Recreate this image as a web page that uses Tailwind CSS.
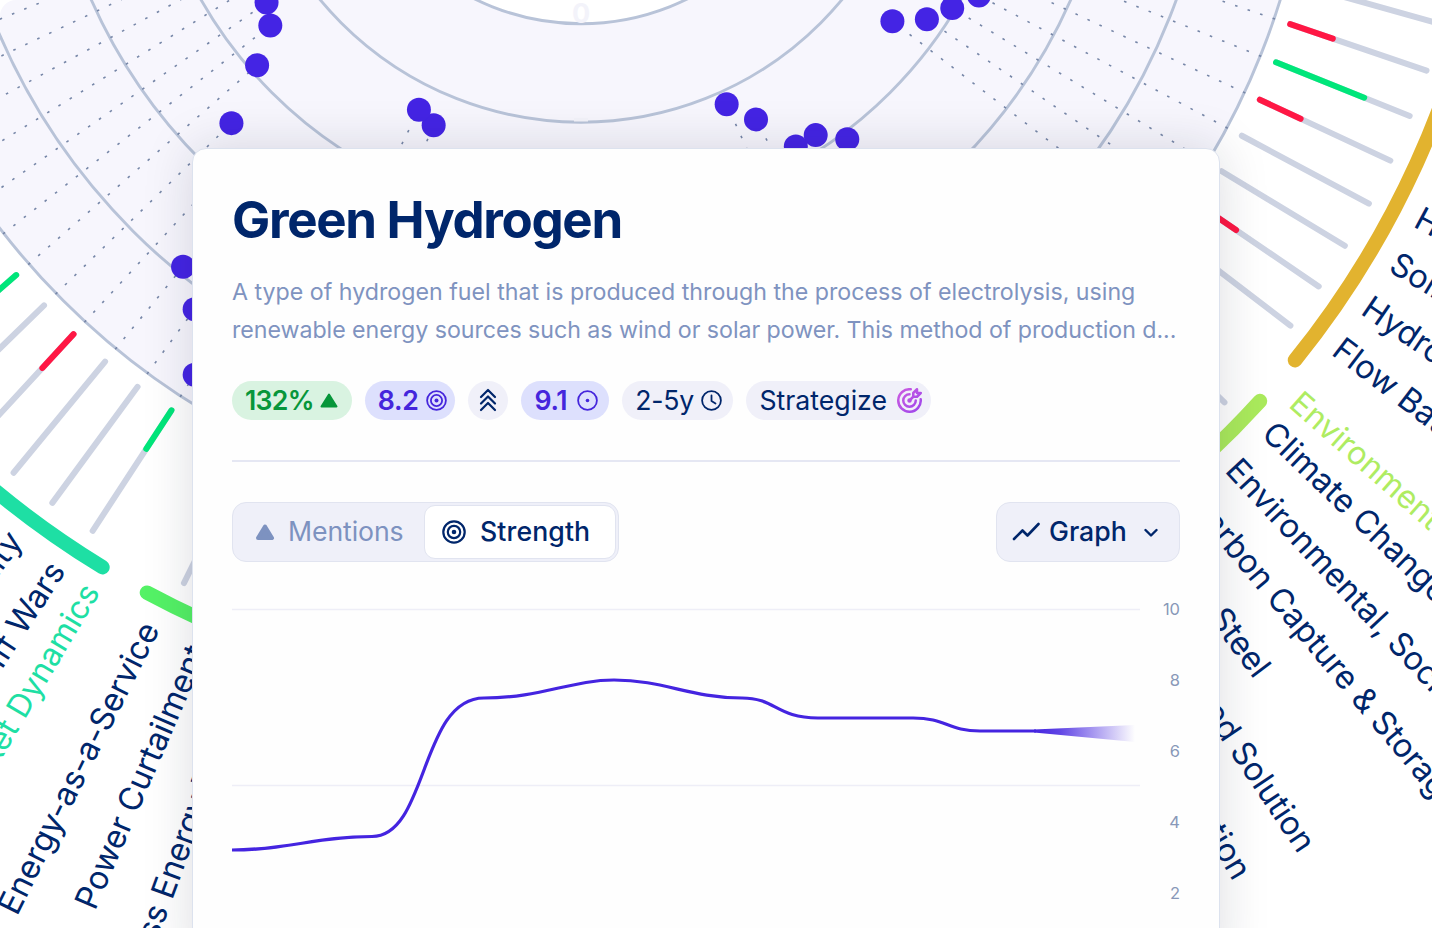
<!DOCTYPE html>
<html lang="en">
<head>
    <meta charset="UTF-8">
    <meta name="viewport" content="width=device-width, initial-scale=1.0">
    <title>Green Hydrogen</title>
    <script src="https://cdn.jsdelivr.net/npm/@tailwindcss/browser@4"></script>
</head>
<body class="relative h-screen overflow-hidden bg-white font-['Inter',sans-serif] text-[#00266b]">

    <!-- Radar -->
    <div class="absolute inset-0 overflow-hidden rounded-tl-2xl">
        <svg id="radar" class="block" width="1432" height="928" viewBox="0 0 1432 928"></svg>
    </div>

    <!-- Trend card -->
    <main class="relative mt-[148px] ml-[192px] h-[820px] w-[1028px] rounded-[14px] border border-[#dce2ee] bg-[#fefefe] px-[39px] pt-[41px] shadow-[0_0_50px_rgba(20,24,50,0.15)]">
        <h1 class="h-[60px] text-[51px] leading-[60px] font-bold tracking-[-1.3px] whitespace-nowrap">Green Hydrogen</h1>
        <p class="mt-[23px] h-[76px] text-[23.2px] leading-[38px] whitespace-nowrap text-[#7f93c0]">A type of hydrogen fuel that is produced through the process of electrolysis, using<br><span class="tracking-[-0.04px]">renewable energy sources such as wind or solar power. This method of production d...</span></p>

        <!-- Badges -->
        <div class="mt-[31.5px] flex h-[39.5px] gap-[13.3px] text-[26.67px] leading-[39px]">
            <div class="flex w-[119.5px] items-center justify-between rounded-full bg-[#d9f3e1] pr-[14px] pl-[13px] font-semibold text-[#07963a]">
                <span class="tracking-[-0.7px]">132%</span>
                <svg width="18" height="15" viewBox="0 0 18 15"><path d="M9 1.5 16.5 13.5H1.5Z" fill="currentColor" stroke="currentColor" stroke-width="2" stroke-linejoin="round"/></svg>
            </div>
            <div class="flex w-[90px] items-center justify-between rounded-full bg-[#dde0fd] pr-2 pl-[13px] font-semibold text-[#4526dc]">
                <span class="tracking-[-0.3px]">8.2</span>
                <svg width="21" height="21" viewBox="0 0 21 21" fill="none" stroke="currentColor" stroke-width="1.8"><circle cx="10.5" cy="10.5" r="9.4"/><circle cx="10.5" cy="10.5" r="5.6"/><circle cx="10.5" cy="10.5" r="2" fill="currentColor" stroke="none"/></svg>
            </div>
            <div class="flex w-10 items-center justify-center rounded-full bg-[#f0f0f9]">
                <svg width="18" height="24" viewBox="0 0 18 24" fill="none" stroke="currentColor" stroke-width="2.2" stroke-linecap="round" stroke-linejoin="round"><path d="M2 9 9 2l7 7M2 15.5l7-7 7 7M2 22l7-7 7 7"/></svg>
            </div>
            <div class="flex w-[87.5px] items-center justify-between rounded-full bg-[#dde0fd] pr-[11px] pl-[13px] font-semibold text-[#4526dc]">
                <span class="tracking-[-0.3px]">9.1</span>
                <svg width="21" height="21" viewBox="0 0 21 21" fill="none" stroke="currentColor" stroke-width="1.8"><circle cx="10.5" cy="10.5" r="9.4"/><circle cx="10.5" cy="10.5" r="1.8" fill="currentColor" stroke="none"/></svg>
            </div>
            <div class="flex w-[111px] items-center justify-between rounded-full bg-[#f0f0f9] pr-[11px] pl-[13px]">
                <span class="tracking-[-0.2px]">2-5y</span>
                <svg width="21" height="21" viewBox="0 0 21 21" fill="none" stroke="currentColor" stroke-width="1.8" stroke-linecap="round" stroke-linejoin="round"><circle cx="10.5" cy="10.5" r="9.4"/><path d="M10.5 5.5v5.5l4 2.5"/></svg>
            </div>
            <div class="flex w-[184.5px] items-center justify-between rounded-full bg-[#f0f0f9] pr-[9px] pl-[13px]">
                <span>Strategize</span>
                <svg width="25" height="25" viewBox="2 2 20 20" fill="none" stroke="url(#purple)" stroke-width="2" stroke-linecap="round" stroke-linejoin="round">
                    <defs><linearGradient id="purple" gradientUnits="userSpaceOnUse" x1="2" y1="2" x2="22" y2="22"><stop offset="0" stop-color="#cf5ce0"/><stop offset="1" stop-color="#9a45ec"/></linearGradient></defs>
                    <circle cx="12" cy="12" r=".8"/>
                    <path d="M12 7a5 5 0 1 0 5 5M13 3.055A9 9 0 1 0 20.941 11M15 6v3h3l3-3h-3V3zM15 9l-3 3"/>
                </svg>
            </div>
        </div>

        <div class="mt-10 h-[2px] bg-[#e5e7f3]"></div>

        <!-- Controls -->
        <div class="mt-10 flex h-[60px] justify-between text-[26.67px]">
            <div class="flex w-[387px] rounded-[14px] border border-[#e1e4f0] bg-[#eff0f9] py-[2px] pr-[2px]">
                <div class="flex w-[191px] items-center pl-[22px] text-[#7d92c0]">
                    <svg width="20" height="17" viewBox="0 0 20 17"><path d="M10 2.5 17 14H3Z" fill="currentColor" stroke="currentColor" stroke-width="4" stroke-linejoin="round"/></svg>
                    <span class="mb-[2px] ml-[13px] tracking-[-0.1px]">Mentions</span>
                </div>
                <div class="flex flex-1 items-center rounded-[11px] border border-[#e1e4f0] bg-white pl-[17px] font-medium">
                    <svg width="24" height="24" viewBox="0 0 24 24" fill="none" stroke="currentColor" stroke-width="2.2"><circle cx="12" cy="12" r="10.7"/><circle cx="12" cy="12" r="6.2"/><circle cx="12" cy="12" r="2.3" fill="currentColor" stroke="none"/></svg>
                    <span class="mb-[2px] ml-[14px] tracking-[0.1px]">Strength</span>
                </div>
            </div>
            <div class="flex w-[184px] items-center rounded-[14px] border border-[#e1e4f0] bg-[#eff0f9] pl-[15px] font-medium">
                <svg width="28" height="20" viewBox="0 0 28 20" fill="none" stroke="currentColor" stroke-width="2.6" stroke-linecap="round" stroke-linejoin="round"><path d="M2 17 10.5 8.5l5 5L26.5 2"/></svg>
                <span class="mb-[2px] ml-[9px]">Graph</span>
                <svg class="mt-[2px] ml-[17px]" width="14" height="10" viewBox="0 0 14 10" fill="none" stroke="currentColor" stroke-width="2.4" stroke-linecap="round" stroke-linejoin="round"><path d="m1.5 2 5.5 5.5L12.5 2"/></svg>
            </div>
        </div>

        <!-- Graph -->
        <svg class="block" width="948" height="366" viewBox="232 562 948 366">
            <defs>
                <linearGradient id="fade" x1="0" x2="1" y1="0" y2="0">
                    <stop offset="0" stop-color="#4424e0"/>
                    <stop offset="0.25" stop-color="#4424e0" stop-opacity="0.85"/>
                    <stop offset="1" stop-color="#4424e0" stop-opacity="0"/>
                </linearGradient>
            </defs>
            <path d="M232 609.5H1140M232 785.5H1140" stroke="#eeeef7" stroke-width="1.5"/>
            <path d="M1034 729.5 1135 725V742L1034 732.5Z" fill="url(#fade)"/>
            <path d="M232 850C288 850 316 836.5 372 836.5C428 836.5 420 698 484 698C540 698 572 680 614 680C664 680 690 698 742 698C776 698 776 718 818 718H913C946 718 948 731 980 731H1036" fill="none" stroke="#4424e0" stroke-width="3.2"/>
            <g class="text-[16.5px]" fill="#8898b8" text-anchor="end">
                <text x="1180" y="615">10</text>
                <text x="1180" y="686">8</text>
                <text x="1180" y="757">6</text>
                <text x="1180" y="828">4</text>
                <text x="1180" y="898.5">2</text>
            </g>
        </svg>
    </main>

    <script>
        const CX = 581, CY = -216.8;
        const RINGS = [240.5, 339, 437.3, 535.5, 633.5, 732];
        const RED = "#ff1744", GREEN = "#00e67a", GRAY = "#cdd3e2";

        function pt(angle, r) {
            const a = angle * Math.PI / 180;
            return [CX + r * Math.cos(a), CY + r * Math.sin(a)];
        }

        function line(angle, r1, r2, attrs) {
            const [x1, y1] = pt(angle, r1), [x2, y2] = pt(angle, r2);
            return `<line x1="${x1}" y1="${y1}" x2="${x2}" y2="${y2}" ${attrs}/>`;
        }

        function arc(from, to, r, color) {
            const [x1, y1] = pt(from, r), [x2, y2] = pt(to, r);
            return `<path d="M${x1} ${y1}A${r} ${r} 0 0 1 ${x2} ${y2}" fill="none" stroke="${color}" stroke-width="14.5" stroke-linecap="round"/>`;
        }

        // [angle, radius of the dot, colour of the bar, end radius of the coloured part]
        const trends = [
            [15.65, 480], [18.77, 470, RED, 794], [21.88, 460, GREEN, 844], [25, 455, RED, 794],
            [28.08, 451], [31.2, 434], [34.3, 418.7, RED, 793], [37.4, 392],
            [43.9, 620], [47, 600], [50.1, 600], [53.2, 444.5], [56.3, 423], [59.4, 422], [62.5, 379], [65.6, 352.6],
            [113.3, 372.5], [116.4, 364.5],
            [123.15, 706.5, GREEN, 795], [126.3, 652.6], [129.45, 626.3], [132.65, 545, RED, 795],
            [135.8, 487.6], [138.95, 429.5, GREEN, 860], [142.05, 394], [145.1, 383.4],
            [148.3, 380], [151.6, 380], [154.8, 380], [157.9, 380],
        ];

        // [angle, text, colour]
        const labels = [
            [28.05, "Hydrogen Storage"], [31.15, "Solid State Batteries"], [34.26, "Hydropower"], [37.3, "Flow Batteries"],
            [41.4, "Environment", "#aeec62"],
            [43.85, "Climate Change"], [46.95, "Environmental, Social"], [50, "Carbon Capture & Storage"],
            [53.1, "Green Steel"], [56.2, "Nature-Based Solution"], [59.3, "Carbon Sequestration"],
            [110.1, "Wireless Energy Transfer"], [113.3, "Power Curtailment"], [116.45, "Energy-as-a-Service"],
            [120.7, "Market Dynamics", "#1edfa4"],
            [123.15, "Tariff Wars"], [126.3, "Price Volatility"],
        ];

        let out = `<circle cx="${CX}" cy="${CY}" r="732" fill="#f7f6fd"/><circle cx="${CX}" cy="${CY}" r="240" fill="#fff"/>`;

        RINGS.forEach(r => {
            out += `<circle cx="${CX}" cy="${CY}" r="${r}" fill="none" stroke="#b8c3d8" stroke-width="2.9"/>`;
        });

        // scale captions on the rings
        out += `<text x="${CX}" y="23" text-anchor="middle" class="text-[27px] font-bold" fill="#f3f3fa">0</text>`;
        out += `<rect x="574" y="118" width="14" height="3.5" fill="#f3f3fa"/>`;

        trends.forEach(([angle, r]) => {
            out += line(angle, 733, r, `stroke="#7787a8" stroke-width="1.6" stroke-dasharray="2.6 10.6"`);
        });
        trends.forEach(([angle, r, color, end]) => {
            const [x, y] = pt(angle, r);
            out += `<circle cx="${x}" cy="${y}" r="12" fill="#4424e4"/>`;
            out += line(angle, 749, 893, `stroke="${GRAY}" stroke-width="6" stroke-linecap="round"`);
            if (color) {
                out += line(angle, 749, end, `stroke="${color}" stroke-width="6" stroke-linecap="round"`);
            }
        });

        out += arc(10, 38.94, 918, "#e2b32f");
        out += arc(42.3, 80, 918, "#aaea5c");
        out += arc(100, 118.2, 918.5, "#54f266");
        out += arc(121.4, 140, 918.5, "#1edfa4");

        labels.forEach(([angle, text, color]) => {
            const left = angle > 90;
            const [x, y] = pt(angle, left ? (angle > 120 ? 941 : 945) : 942);
            out += `<text transform="translate(${x} ${y}) rotate(${left ? angle - 180 : angle})" text-anchor="${left ? "end" : "start"}" class="${color ? "text-[32px]" : "text-[32.5px]"}" fill="${color || "#00266b"}">${text.replace("&", "&amp;")}</text>`;
        });

        document.getElementById("radar").innerHTML = out;
    </script>
</body>
</html>
